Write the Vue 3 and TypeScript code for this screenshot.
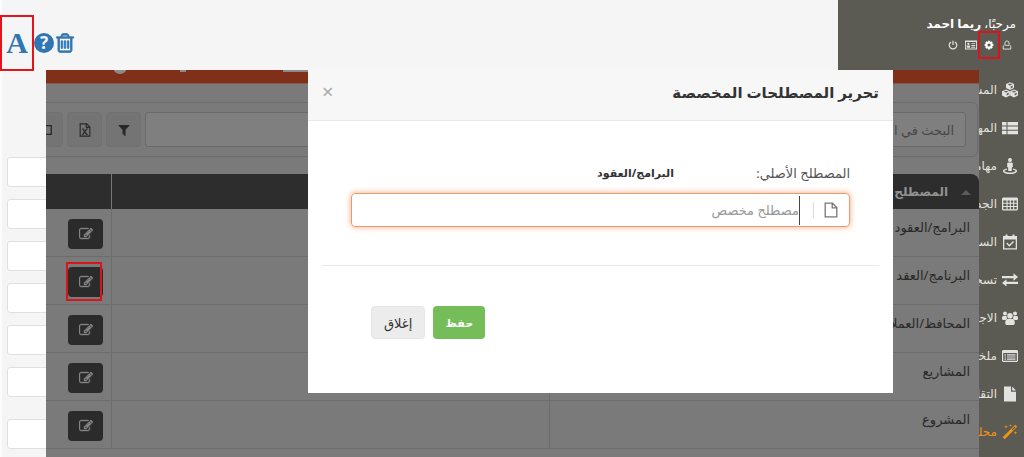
<script setup lang="ts">
import { ref } from 'vue'

interface MenuItem {
  label: string
  icon: string
  active?: boolean
}

const customTerm = ref('')
const search = ref('')
const sideFields = [1, 2, 3, 4, 5, 6, 7]

const menu: MenuItem[] = [
  {
    label: 'المشاريع',
    icon: 'M8 .2 12 1.900V6L8 7.900 4 6V1.900ZM8 1.500 5.800 2.400 8 3.400l2.200-1ZM8.700 4.400v2l2-1v-1.900ZM4 7.400 7.900 9.200V13.600L4 15.600 0 13.600V9.200ZM4 8.800 1.800 9.700 4 10.600l2.200-.9ZM4.700 11.600v2l2-1v-1.900ZM12 7.400l4 1.800v4.400L12 15.600 8.100 13.600V9.200ZM12 8.800l-2.200.9 2.200.9 2.200-.9ZM12.700 11.600v2l2-1v-1.900Z',
  },
  { label: 'المهام', icon: 'M0 2h4.500v3.400H0ZM5.500 2H16v3.400H5.500ZM0 6.400h4.500v3.400H0ZM5.500 6.400H16v3.400H5.500ZM0 10.800h4.500v3.400H0ZM5.500 10.800H16v3.400H5.500Z' },
  { label: 'مهامي', icon: 'M8 0a2 2 0 1 1 0 4 2 2 0 0 1 0-4ZM6 4.500h4l.8.8V9l-1 .6V13H6.200V9.600L5.200 9V5.300ZM5 10.500v1.200c-1.500.3-2.500.7-2.500 1.200 0 .8 2.500 1.500 5.500 1.500s5.500-.7 5.500-1.500c0-.5-1-.9-2.500-1.200v-1.200c2.600.4 4 1.300 4 2.400C15 14.800 12 16 8 16s-7-1.200-7-3.100c0-1.100 1.400-2 4-2.400Z' },
  { label: 'الجدول', icon: 'M1 1.500h14l1 1v11l-1 1H1l-1-1v-11ZM1.300 4.500v2.200h3.200V4.500ZM5.600 4.500v2.200h2.200V4.500ZM8.900 4.500v2.200h2.200V4.500ZM12.200 4.500v2.200h2.500V4.500ZM1.300 7.800V10h3.200V7.800ZM5.600 7.800V10h2.200V7.800ZM8.900 7.800V10h2.200V7.800ZM12.200 7.800V10h2.500V7.800ZM1.300 11.100v2.200h3.200v-2.200ZM5.600 11.100v2.200h2.200v-2.200ZM8.900 11.100v2.200h2.200v-2.200ZM12.200 11.100v2.200h2.500v-2.200Z' },
  { label: 'السجل', icon: 'M1 2h2.500V.5h2V2h5V.5h2V2H15v13.500H1ZM2.300 5.500v8.700h11.400V5.500ZM5.200 8.600 7.300 10.700 11 7l1 1-4.700 4.700-3.100-3.100Z' },
  { label: 'تسجيل', icon: 'M0 4h11.500V1.300L16 5l-4.500 3.700V6.200H0ZM16 9.800v2.200H4.500v2.500L0 10.900 4.500 7.300v2.500Z' },
  { label: 'الاجتماعات', icon: 'M3 1.500a2 2 0 1 1 0 4 2 2 0 0 1 0-4ZM13 1.500a2 2 0 1 1 0 4 2 2 0 0 1 0-4ZM8 3a2.800 2.800 0 1 1 0 5.600A2.800 2.800 0 0 1 8 3ZM1 6h3.500l.6 2.400L3.700 10H.8L0 9V7ZM15 6h-3.500l-.6 2.400 1.400 1.600h2.900l.8-1V7ZM5 9h6l1.700 2v3l-1 1H4.300l-1-1v-3Z' },
  { label: 'ملخص', icon: 'M1 2h14l1 1v10l-1 1H1l-1-1V3ZM1.200 5v7.700h13.600V5ZM2.500 6.300h1.500v1.200H2.500ZM5 6.300h8.500v1.200H5ZM2.500 8.400h1.500v1.200H2.500ZM5 8.400h8.500v1.200H5ZM2.500 10.500h1.500v1.200H2.500ZM5 10.500h8.500v1.200H5Z' },
  { label: 'التقارير', icon: 'M2 .5h7v5.200h5V15.500H2ZM10.200.5 14 4.600h-3.800Z' },
  { label: 'محلل', icon: 'M13.200.8 15.200 2.800 2.700 15.300.7 13.300ZM12.800 2.400 9.800 5.400l.8.8 3-3ZM4 .8l.5 1.500L6 2.800l-1.500.5L4 4.800l-.5-1.500L2 2.800l1.500-.5ZM8.500.2l.4.9.9.4-.9.4-.4.9-.4-.9-.9-.4.9-.4ZM13.500 7l.5 1.300 1.300.5-1.300.5-.5 1.300-.5-1.300-1.300-.5 1.300-.5Z', active: true },
]

const terms = [
  { name: 'البرامج/العقود', marked: false },
  { name: 'البرنامج/العقد', marked: true },
  { name: 'المحافظ/العملاء', marked: false },
  { name: 'المشاريع', marked: false },
  { name: 'المشروع', marked: false },
]
</script>

<template>
  <div class="app" dir="rtl">
    <aside class="sidebar">
      <p class="welcome">مرحبًا، <b>ريما احمد</b></p>
      <div class="quick">
        <button aria-label="الحساب">
          <svg viewBox="0 0 16 16"><path d="M8 1.500a3.300 3.300 0 0 1 3.300 3.300V7l2.700 3v4.500H2V10l2.700-3V4.800A3.300 3.300 0 0 1 8 1.500ZM5 8.500h6" fill="none" stroke="currentColor" stroke-width="1.500" /></svg>
        </button>
        <button class="marked" aria-label="الإعدادات">
          <svg viewBox="0 0 16 16"><path fill-rule="evenodd" d="M6.500 1h3l.4 2 1.900-1 2.200 2.200-1 1.900 2 .4v3l-2 .4 1 1.900-2.200 2.200-1.900-1-.4 2h-3l-.4-2-1.900 1L2 11.800l1-1.900-2-.4v-3l2-.4-1-1.900L4.200 2l1.900 1ZM8 5.500a2.500 2.500 0 1 0 0 5 2.500 2.500 0 0 0 0-5Z" /></svg>
        </button>
        <button aria-label="البطاقة">
          <svg class="card" viewBox="0 0 16 16"><path fill-rule="evenodd" d="M0 2h16v12H0ZM1.200 4v8.800h13.600V4ZM4.500 5a1.500 1.500 0 1 1 0 3 1.500 1.500 0 0 1 0-3ZM2.300 8.500h4.500v3H2.300ZM8.500 5.500h5v1.300h-5ZM8.500 8h5v1.300h-5ZM8.500 10.300h5v1.200h-5Z" /></svg>
        </button>
        <button aria-label="خروج">
          <svg viewBox="0 0 16 16"><path d="M4.800 3.200a6 6 0 1 0 6.400 0M8 1v7" fill="none" stroke="currentColor" stroke-width="2" /></svg>
        </button>
      </div>
      <nav class="menu">
        <a v-for="item in menu" :key="item.label" href="#" :class="{ active: item.active }">
          <svg viewBox="0 0 16 16"><path fill-rule="evenodd" :d="item.icon" /></svg>
          <span>{{ item.label }}</span>
        </a>
      </nav>
    </aside>

    <main class="page">
      <div class="tools">
        <button aria-label="حذف">
          <svg viewBox="0 0 1792 1792" stroke="currentColor" stroke-width="60"><path d="M704 736v576q0 14-9 23t-23 9h-64q-14 0-23-9t-9-23v-576q0-14 9-23t23-9h64q14 0 23 9t9 23zm256 0v576q0 14-9 23t-23 9h-64q-14 0-23-9t-9-23v-576q0-14 9-23t23-9h64q14 0 23 9t9 23zm256 0v576q0 14-9 23t-23 9h-64q-14 0-23-9t-9-23v-576q0-14 9-23t23-9h64q14 0 23 9t9 23zm128 724v-948h-896v948q0 22 7 40.500t14.500 27 10.500 8.500h832q3 0 10.500-8.500t14.500-27 7-40.500zm-672-1076h448l-48-117q-7-9-17-11h-317q-10 2-17 11zm928 32v64q0 14-9 23t-23 9h-96v948q0 83-47 143.500t-113 60.500h-832q-66 0-113-58.500t-47-141.500v-952h-96q-14 0-23-9t-9-23v-64q0-14 9-23t23-9h309l70-167q15-37 54-63t79-26h320q40 0 79 26t54 63l70 167h309q14 0 23 9t9 23z" /></svg>
        </button>
        <button class="help"><span>?</span></button>
        <button class="letter">A</button>
      </div>
      <div class="fields">
        <input v-for="n in sideFields" :key="n" type="text" :aria-label="'حقل ' + n" />
      </div>
    </main>

    <section class="panel">
      <div class="topbar"><i class="dash"></i><i class="dot"></i><i class="avatar"></i></div>
      <div class="searchbar">
        <input v-model="search" type="text" placeholder="البحث في المصطلحات" aria-label="بحث" />
        <button aria-label="تصفية">
          <svg viewBox="0 0 1792 1792"><path d="M1595 295q17 41-14 70l-493 493v742q0 42-39 59-13 5-25 5-27 0-45-19l-256-256q-19-19-19-45v-486l-493-493q-31-29-14-70 17-39 59-39h1280q42 0 59 39z" /></svg>
        </button>
        <button aria-label="تصدير">
          <svg viewBox="0 0 16 16"><path d="M2.500 1h7.500l3.500 3.500V15h-11ZM9.500 1v4h4M5.500 7l4.500 6M10 7l-4.500 6M4.800 7h2M9 7h2M4.800 13h2M9 13h2" fill="none" stroke="currentColor" stroke-width="1.300" /></svg>
        </button>
        <button aria-label="أعمدة">
          <svg viewBox="0 0 16 16"><path d="M1 3h13v10H1Z" fill="none" stroke="currentColor" stroke-width="1.500" /></svg>
        </button>
      </div>
      <table class="terms">
        <colgroup><col class="c-name" /><col /><col class="c-edit" /></colgroup>
        <thead>
          <tr>
            <th><span class="sort"></span>المصطلح الأصلي</th>
            <th></th>
            <th></th>
          </tr>
        </thead>
        <tbody>
          <tr v-for="term in terms" :key="term.name">
            <td>{{ term.name }}</td>
            <td></td>
            <td class="edit">
              <button :class="{ marked: term.marked }" :aria-label="'تحرير ' + term.name">
                <svg viewBox="0 0 1792 1792" stroke="currentColor" stroke-width="50"><path d="M888 1184l116-116-152-152-116 116v56h96v96h56zm440-720q-16-16-33 1l-350 350q-17 17-1 33t33-1l350-350q17-17 1-33zm80 594v190q0 119-84.500 203.500t-203.500 84.500h-832q-119 0-203.500-84.500t-84.500-203.500v-832q0-119 84.500-203.500t203.500-84.500h832q63 0 117 25 15 7 18 23 3 17-9 29l-49 49q-14 14-32 8-23-6-45-6h-832q-66 0-113 47t-47 113v832q0 66 47 113t113 47h832q66 0 113-47t47-113v-126q0-13 9-22l64-64q15-15 35-7t20 29zm-96-738l288 288-672 672h-288v-288zm444 132l-92 92-288-288 92-92q28-28 68-28t68 28l152 152q28 28 28 68t-28 68z" /></svg>
              </button>
            </td>
          </tr>
        </tbody>
      </table>
    </section>

    <div class="modal" role="dialog" aria-labelledby="modal-title">
      <header>
        <h2 id="modal-title">تحرير المصطلحات المخصصة</h2>
        <button aria-label="إغلاق النافذة">×</button>
      </header>
      <form @submit.prevent>
        <div class="original">
          <label for="custom-term">المصطلح الأصلي:</label>
          <b>البرامج/العقود</b>
        </div>
        <div class="field">
          <svg viewBox="0 0 16 16"><path d="M2.200 1.200h7.300l4.300 4.300v9.300H2.200ZM9.200 1.200v4.600h4.600" fill="none" stroke="currentColor" stroke-width="1.300" /></svg>
          <input id="custom-term" v-model="customTerm" type="text" placeholder="مصطلح مخصص" />
        </div>
        <hr />
        <div class="actions">
          <button class="save" type="submit">حفظ</button>
          <button class="close" type="button">إغلاق</button>
        </div>
      </form>
    </div>
  </div>
</template>

<style>
body {
  margin: 0;
  background: #f5f5f5;
}
</style>

<style scoped>
* {
  box-sizing: border-box;
}
.app {
  position: relative;
  display: flex;
  height: 100vh;
  overflow: hidden;
  font-family: "Noto Sans", "Open Sans", "DejaVu Sans", sans-serif;
  font-size: 13px;
  line-height: 20px;
  color: #333;
}
button,
input {
  margin: 0;
  padding: 0;
  border: 0;
  font: inherit;
  color: inherit;
  background: none;
}
svg {
  display: block;
  fill: currentColor;
}
.sidebar {
  flex: 0 0 186px;
  background: #5b5b54;
  color: #e2e2df;
}
.welcome {
  margin: 14px 8px 0;
  color: #fff;
  font-size: 12px;
}
.quick {
  display: flex;
  gap: 4px;
  padding: 0 10px;
  margin-top: -3px;
}
.quick button {
  display: grid;
  place-items: center;
  width: 14px;
  height: 28px;
}
.quick svg {
  width: 10px;
  height: 10px;
}
.quick .card {
  width: 12px;
  height: 12px;
}
.quick .marked {
  width: 22px;
  margin: 0 -4px;
  border: 2px solid #d8141c;
  color: #fff;
}
.menu {
  display: flex;
  flex-direction: column;
  width: 45px;
  margin-top: 12px;
}
.menu a {
  display: flex;
  align-items: center;
  gap: 5px;
  height: 38px;
  padding-right: 6px;
  color: inherit;
  font-size: 12px;
  text-decoration: none;
  white-space: nowrap;
}
.menu span {
  flex: 1;
  min-width: 0;
  overflow: hidden;
}
.menu svg {
  flex: none;
  width: 16px;
  height: 16px;
}
.menu .active {
  color: #ee9418;
}
.page {
  flex: 1;
  border-left: 2px solid #fcfcfc;
}
.tools {
  display: flex;
  justify-content: flex-end;
  align-items: center;
  margin: 15px 0 0 -2px;
  color: #2f76b2;
}
.tools svg {
  width: 22px;
  height: 22px;
}
.help {
  display: grid;
  place-items: center;
  width: 20px;
  height: 20px;
  border-radius: 50%;
  background: #2f76b2;
  color: #f5f5f5;
  font-size: 17px;
  font-weight: 700;
}
.letter {
  width: 34px;
  height: 56px;
  border: 2px solid #e3141c;
  font: 700 30px "Liberation Serif", serif;
}
.fields {
  display: flex;
  flex-direction: column;
  gap: 12px;
  padding: 86px 5px 0;
}
.fields input {
  height: 30px;
  border: 1px solid #e0e0e0;
  border-radius: 3px;
  background: #fff;
}
.fields input:last-child {
  margin-top: 10px;
}
.panel {
  position: absolute;
  inset: 70px 45px 0 46px;
  overflow: hidden;
  background: #7a7a7a;
  color: #292929;
}
.topbar {
  display: flex;
  gap: 53px;
  height: 14px;
  padding-right: 671px;
  overflow: hidden;
  background: #803019;
  border-bottom: 1px solid #8a5a4c;
}
.topbar i {
  background: #8b8b8b;
}
.dash {
  width: 25px;
  height: 2px;
}
.dot {
  width: 6px;
  height: 2px;
  margin-right: 44px;
}
.avatar {
  width: 14px;
  height: 14px;
  margin-top: -10px;
  border-radius: 50%;
}
.searchbar {
  display: flex;
  gap: 4px;
  margin: 18px 1px 0 -30px;
  padding: 9px 11px;
  border: 1px solid #6c6c6c;
  border-radius: 6px;
}
.searchbar input {
  flex: 1;
  min-width: 0;
  height: 35px;
  padding: 0 11px;
  border: 1px solid #696969;
  border-radius: 3px;
  background: #7f7f7f;
}
.searchbar input::placeholder {
  color: #484848;
  opacity: 1;
}
.searchbar button {
  display: grid;
  place-items: center;
  width: 35px;
  height: 35px;
  border: 1px solid #717171;
  border-radius: 4px;
  background: #747474;
}
.searchbar svg {
  width: 14px;
  height: 14px;
}
.terms {
  width: 100%;
  margin-top: 17px;
  table-layout: fixed;
  border-spacing: 0;
}
.c-name {
  width: 46%;
}
.c-edit {
  width: 66px;
}
th {
  height: 35px;
  padding: 0 8px;
  background: #2d2d2d;
  color: #929292;
  font-size: 12px;
  text-align: right;
}
th:first-child {
  border-top-right-radius: 8px;
}
th:last-child {
  border-right: 1px solid #777;
}
.sort {
  display: inline-block;
  margin-left: 13px;
  border: 5px solid transparent;
  border-top: 0;
  border-bottom-color: #5c5c5c;
  vertical-align: middle;
}
td {
  height: 48px;
  padding: 8px 9px;
  border-bottom: 1px solid #6c6c6c;
  vertical-align: top;
}
td + td {
  border-right: 1px solid #6c6c6c;
}
td.edit {
  padding: 10px 8px 0;
}
.edit button {
  position: relative;
  display: grid;
  place-items: center;
  width: 35px;
  height: 30px;
  border-radius: 4px;
  background: #2b2b2b;
  color: #858585;
}
.edit svg {
  width: 14px;
  height: 14px;
}
.edit .marked::after {
  content: "";
  position: absolute;
  inset: -5px 1px -4px -2px;
  border: 2px solid #d8141c;
}
.modal {
  position: absolute;
  top: 70px;
  left: 308px;
  right: 131px;
  background: #fff;
}
.modal header {
  display: flex;
  justify-content: space-between;
  align-items: flex-start;
  padding: 10px 14px 16px;
  border-bottom: 1px solid #e9e9e9;
  background: #f7f7f7;
}
.modal h2 {
  margin: 0;
  font-size: 15px;
  line-height: 24px;
}
.modal header button {
  font-size: 20px;
  line-height: 24px;
  color: #aaa;
}
.modal form {
  padding: 40px 14px 54px;
}
.original {
  display: flex;
  padding: 0 29px;
  line-height: 24px;
}
.original label {
  flex: 0 0 176px;
  color: #555;
}
.original b {
  font-size: 11px;
}
.field {
  display: flex;
  align-items: center;
  height: 34px;
  margin: 8px 29px 0;
  padding: 0 10px;
  border: 1px solid #ee9a70;
  border-radius: 4px;
  box-shadow: 0 0 6px #f5a982;
}
.field svg {
  width: 16px;
  height: 16px;
  color: #777;
}
.field::before {
  content: "";
  order: 1;
  width: 1px;
  height: 16px;
  margin-right: 9px;
  background: #ddd;
}
.field input {
  order: 2;
  flex: 1;
  min-width: 0;
  height: 29px;
  margin-right: 13px;
  border-right: 1px solid #444;
  outline: 0;
}
.field input::placeholder {
  color: #999;
  opacity: 1;
}
.modal hr {
  margin: 38px 0 40px;
  border: 0;
  border-top: 1px solid #e9e9e9;
}
.actions {
  display: flex;
  justify-content: flex-end;
  gap: 8px;
  padding-left: 49px;
}
.actions button {
  min-width: 52px;
  height: 33px;
  padding: 0 12px;
  border-radius: 4px;
}
.actions .save {
  background: #74bd58;
  color: #fff;
  font-size: 11px;
  font-weight: 700;
}
.actions .close {
  border: 1px solid #e4e4e4;
  background: #ececec;
}
</style>
